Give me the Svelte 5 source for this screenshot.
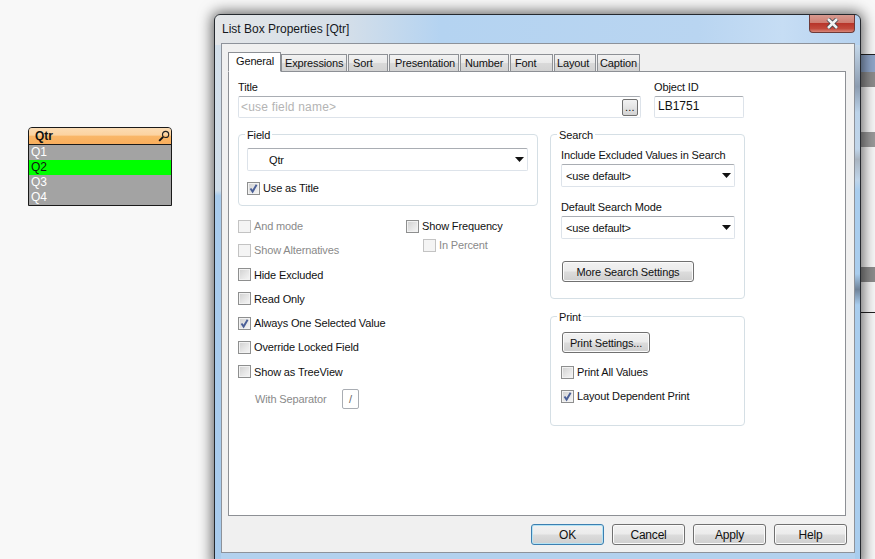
<script>
  const tabs = [
    ['Expressions', 66, 3], ['Sort', 40, 4], ['Presentation', 70, 5], ['Number', 49, 4],
    ['Font', 43, 4], ['Layout', 42, 2], ['Caption', 43, 2]
  ];
  const leftOptions = [
    { label: 'And mode', off: true },
    { label: 'Show Alternatives', off: true },
    { label: 'Hide Excluded' },
    { label: 'Read Only' },
    { label: 'Always One Selected Value', on: true },
    { label: 'Override Locked Field' },
    { label: 'Show as TreeView' }
  ];
</script>

{#snippet check(label, on = false, off = false)}
  <span class="check" class:off>
    <span class="box">
      {#if on}
        <svg width="11" height="11" viewBox="0 0 11 11"><path d="M2.5 5.5 L4.6 8.6 L8.6 1.8" fill="none" stroke="#4a5f97" stroke-width="1.9"/></svg>
      {/if}
    </span>
    <span>{label}</span>
  </span>
{/snippet}

{#snippet combo(text, cls)}
  <div class="combo {cls}">
    <span>{text}</span>
    <svg width="9" height="5" viewBox="0 0 9 5"><path d="M0 0 H9 L4.5 5 Z" fill="#111"/></svg>
  </div>
{/snippet}

<div class="desktop">
  <div class="band b1"></div>
  <div class="band b2"></div>
  <div class="band b3"></div>
  <div class="band b4"></div>
  <div class="band b5"></div>
  <div class="band b6"></div>

  <div class="listbox">
    <div class="lb-title">
      <span>Qtr</span>
      <svg width="12" height="12" viewBox="0 0 12 12"><circle cx="7.6" cy="4.4" r="3.1" fill="none" stroke="#222" stroke-width="1.2"/><path d="M5.2 6.8 L1.2 10.8" stroke="#111" stroke-width="1.9"/></svg>
    </div>
    <div class="lb-row">Q1</div>
    <div class="lb-row sel">Q2</div>
    <div class="lb-row">Q3</div>
    <div class="lb-row">Q4</div>
  </div>

  <div class="window">
    <div class="edge left"></div>
    <div class="edge right"></div>
    <div class="titlebar">
      <span>List Box Properties [Qtr]</span>
      <div class="close">
        <svg width="15" height="11" viewBox="0 0 15 11"><path d="M3 1 L12 10 M12 1 L3 10" stroke="#39414a" stroke-width="4.2"/><path d="M3 1 L12 10 M12 1 L3 10" stroke="#f2f2f2" stroke-width="2.6"/></svg>
      </div>
    </div>
    <div class="client">
      <div class="tabstrip">
        <div class="tab active">General</div>
        {#each tabs as [name, w, pad]}
          <div class="tab" style="width: {w}px; padding-left: {pad}px">{name}</div>
        {/each}
      </div>
      <div class="page">
        <div class="top-row">
          <div class="title-col">
            <div class="lbl">Title</div>
            <div class="input title-input">
              <span class="ph">&lt;use field name&gt;</span>
              <div class="dots">...</div>
            </div>
          </div>
          <div class="id-col">
            <div class="lbl">Object ID</div>
            <div class="input id-input">LB1751</div>
          </div>
        </div>
        <div class="columns">
          <div class="col-left">
            <fieldset class="field-group">
              <legend>Field</legend>
              {@render combo('Qtr', 'field-combo')}
              <div class="use-title">{@render check('Use as Title', true)}</div>
            </fieldset>
            <div class="options">
              <div class="opt-col">
                {#each leftOptions as o}
                  <div class="opt">{@render check(o.label, o.on, o.off)}</div>
                {/each}
                <div class="sep-row">
                  <span>With Separator</span>
                  <div class="sep-input">/</div>
                </div>
              </div>
              <div class="opt-col2">
                <div class="opt">{@render check('Show Frequency')}</div>
                <div class="in-percent">{@render check('In Percent', false, true)}</div>
              </div>
            </div>
          </div>
          <div class="col-right">
            <fieldset class="search-group">
              <legend>Search</legend>
              <div class="sub-lbl first">Include Excluded Values in Search</div>
              {@render combo('<use default>', 'small-combo')}
              <div class="sub-lbl second">Default Search Mode</div>
              {@render combo('<use default>', 'small-combo')}
              <div class="btn more">More Search Settings</div>
            </fieldset>
            <fieldset class="print-group">
              <legend>Print</legend>
              <div class="btn print">Print Settings...</div>
              <div class="print-opt first">{@render check('Print All Values')}</div>
              <div class="print-opt">{@render check('Layout Dependent Print', true)}</div>
            </fieldset>
          </div>
        </div>
      </div>
      <div class="footer">
        <div class="btn foot default">OK</div>
        <div class="btn foot">Cancel</div>
        <div class="btn foot">Apply</div>
        <div class="btn foot">Help</div>
      </div>
    </div>
  </div>
</div>

<style>
  :global(body) { margin: 0; }
  .desktop {
    position: relative;
    width: 875px;
    height: 559px;
    overflow: hidden;
    background: #f8f8f8;
    font-family: "Liberation Sans", Arial, sans-serif;
    font-size: 11px;
    letter-spacing: -0.14px;
    color: #111;
  }
  .band { position: absolute; left: 861px; width: 14px; }
  .b1 { top: 54px; height: 1px; background: #222; }
  .b2 { top: 55px; height: 17px; background: #8fa6c9; }
  .b3 { top: 72px; height: 15px; background: #8c8c8c; }
  .b4 { top: 132px; height: 15px; background: #9a9a9a; }
  .b5 { top: 267px; height: 15px; background: #8c8c8c; }
  .b6 { top: 312px; height: 1px; background: #222; }
  .listbox {
    position: absolute;
    left: 28px;
    top: 127px;
    width: 142px;
    border: 1px solid #1a1a1a;
    border-radius: 4px 4px 0 0;
    background: #a3a3a3;
  }
  .lb-title {
    height: 16px;
    display: flex;
    align-items: center;
    justify-content: space-between;
    padding: 0 1px 0 6px;
    border-bottom: 1px solid #1a1a1a;
    border-radius: 3px 3px 0 0;
    background: linear-gradient(#fbdcb4 0, #fcd3a0 45%, #f9b769 50%, #f8ae5c 100%);
    font: bold 12px "Liberation Sans", Arial, sans-serif;
    letter-spacing: 0;
    color: #111;
  }
  .lb-row {
    height: 15px;
    line-height: 15px;
    padding-left: 2px;
    font-size: 12px;
    color: #fff;
    letter-spacing: 0;
  }
  .lb-row.sel { background: #00ff00; color: #111; }

  .window {
    position: absolute;
    left: 214px;
    top: 14px;
    width: 645px;
    height: 550px;
    border: 1px solid #25292e;
    border-radius: 6px 6px 0 0;
    background:
      linear-gradient(180deg, transparent 0 530px, #b3d1ee 530px),
      linear-gradient(90deg, #e4e6e8 0, #d5dfe9 20%, #b4d3f1 35%, #b9d5f1 75%, #c6ddf4 88%, #b6d2ef 100%);
    box-shadow: 0 0 14px 2px rgba(0, 0, 0, .62);
  }
  .edge { position: absolute; top: 30px; bottom: 0; width: 6px; }
  .edge.left {
    left: 0;
    background: linear-gradient(#d3dfea 0, #cfdde9 28%, #a8cbec 29%, #a8cbec 100%);
  }
  .edge.right {
    right: 0;
    width: 5px;
    background: linear-gradient(#c5d8ea 0, #8c9cb0 8%, #bcd3e9 13%, #c0d5ea 20%, #a9b4c0 22%, #c0d5ea 26%, #a9cdee 28%, #a9cdee 44%, #6f8298 47%, #a9cdee 50%, #a9cdee 100%);
  }
  .titlebar {
    height: 28px;
    display: flex;
    align-items: center;
    justify-content: space-between;
    padding-left: 7px;
    font-size: 12px;
    letter-spacing: 0;
    color: #15181c;
    position: relative;
  }
  .close {
    align-self: flex-start;
    width: 46px;
    height: 18px;
    margin-right: 5px;
    display: flex;
    align-items: center;
    justify-content: center;
    box-sizing: border-box;
    border: 1px solid #6e3a38;
    border-top: 0;
    border-radius: 0 0 4px 4px;
    background: linear-gradient(#d79a90 0, #cf7e72 45%, #b8352a 50%, #c24a3c 80%, #d9877a 100%);
  }
  .client {
    position: relative;
    width: 632px;
    height: 508px;
    margin-left: 6px;
    box-sizing: content-box;
    border: 1px solid #8d929a;
    background: #f0f0f0;
  }
  .tabstrip {
    display: flex;
    align-items: flex-end;
    height: 20px;
    padding: 8px 0 0 6px;
    position: relative;
    z-index: 1;
    margin-bottom: -1px;
  }
  .tab {
    box-sizing: border-box;
    height: 18px;
    margin-right: 1px;
    border: 1px solid #8d9095;
    background: linear-gradient(#f2f2f2, #e9e9e9 50%, #d9d9d9 52%, #d2d2d2);
    line-height: 17px;
    white-space: nowrap;
  }
  .tab.active {
    width: 53px;
    height: 20px;
    margin-right: 0;
    padding-left: 7px;
    background: #fff;
    border-bottom-color: #fff;
    line-height: 17px;
  }
  .page {
    box-sizing: border-box;
    width: 618px;
    height: 445px;
    margin-left: 6px;
    padding: 8px 0 0 9px;
    border: 1px solid #8d9095;
    background: #fff;
  }
  .top-row { display: flex; gap: 13px; height: 38px; }
  .lbl { height: 16px; line-height: 14px; }
  .input {
    box-sizing: border-box;
    height: 22px;
    border: 1px solid #dde3ea;
    border-top-color: #a9adb3;
    border-radius: 2px;
    line-height: 18px;
    padding-left: 2px;
  }
  .title-col { width: 403px; }
  .title-input { display: flex; justify-content: space-between; align-items: center; padding-right: 2px; font-size: 12px; letter-spacing: 0.2px; }
  .ph { color: #b4b4b4; }
  .dots {
    box-sizing: border-box;
    width: 16px;
    height: 17px;
    border: 1px solid #707070;
    border-radius: 2px;
    background: linear-gradient(#f2f2f2, #e4e4e4 50%, #d2d2d2);
    text-align: center;
    line-height: 15px;
    font-size: 11px;
  }
  .id-col { width: 90px; }
  .id-input { font-size: 12px; letter-spacing: 0; padding-left: 3px; }
  .columns { display: flex; gap: 12px; margin-top: 9px; }
  .col-left { width: 300px; }
  .col-right { width: 195px; }
  fieldset {
    box-sizing: border-box;
    margin: 0;
    padding: 0;
    border: 1px solid #d5dfe5;
    border-radius: 4px;
    min-width: 0;
  }
  legend {
    padding: 0 2px;
    line-height: 16px;
    height: 14px;
  }
  .field-group { width: 300px; height: 79px; padding: 7px 9px 0 8px; }
  .field-group legend { margin-left: -2px; }
  .search-group legend, .print-group legend { margin-left: -4px; }
  .combo {
    box-sizing: border-box;
    display: flex;
    align-items: center;
    justify-content: space-between;
    border: 1px solid #dde3ea;
    border-top-color: #a9adb3;
    border-radius: 2px;
    background: #fff;
    padding-right: 3px;
  }
  .field-combo { height: 23px; padding-left: 21px; }
  .small-combo { height: 23px; padding-left: 4px; width: 174px; }
  .use-title { margin-top: 10px; }
  .check { display: flex; align-items: center; gap: 3px; height: 14px; line-height: 14px; white-space: nowrap; }
  .check.off { color: #8a8a8a; }
  .box {
    box-sizing: border-box;
    width: 13px;
    height: 13px;
    flex: none;
    border: 1px solid #8e8f8f;
    box-shadow: inset 0 0 0 1px #f2f2f2;
    background: linear-gradient(135deg, #cfcfcf, #e6e6e6 55%, #f6f6f6);
    display: flex;
    align-items: center;
    justify-content: center;
  }
  .check.off .box { border-color: #c3c3c3; background: #f4f4f4; box-shadow: none; }
  .options { display: flex; margin-top: 13px; }
  .opt-col { width: 168px; }
  .opt { height: 24.3px; }
  .sep-row { display: flex; align-items: center; margin: 0 0 0 17px; color: #8a8a8a; height: 20px; }
  .sep-row span { width: 87px; }
  .sep-input {
    box-sizing: border-box;
    width: 17px;
    height: 20px;
    border: 1px solid #a9adb3;
    border-radius: 2px;
    text-align: center;
    line-height: 18px;
    color: #666;
  }
  .in-percent { margin: -5px 0 0 17px; }
  .search-group { height: 172px; padding: 7px 9px 0 10px; }
  .sub-lbl { line-height: 14px; height: 14px; white-space: nowrap; }
  .sub-lbl.first { margin-bottom: 2px; }
  .sub-lbl.second { margin: 13px 0 2px; }
  .btn {
    box-sizing: border-box;
    height: 21px;
    border: 1px solid #707070;
    border-radius: 3px;
    box-shadow: inset 0 0 0 1px #fbfbfb;
    background: linear-gradient(#f2f2f2, #ebebeb 48%, #dcdcdc 52%, #cfcfcf);
    text-align: center;
    line-height: 20px;
  }
  .more { width: 132px; margin: 22px 0 0 1px; }
  .print-group { height: 117px; margin-top: 10px; padding: 9px 0 0 10px; }
  .print { width: 88px; margin-left: 1px; }
  .print-opt { height: 24.33px; }
  .print-opt.first { margin-top: 12px; }
  .footer { display: flex; gap: 8px; justify-content: flex-end; padding: 8px 7px 0 0; }
  .foot { width: 73px; color: #111; font-size: 12px; letter-spacing: -0.2px; }
  .default { border-color: #3c7fb1; box-shadow: inset 0 0 0 1px #b5e3f4; }
</style>
